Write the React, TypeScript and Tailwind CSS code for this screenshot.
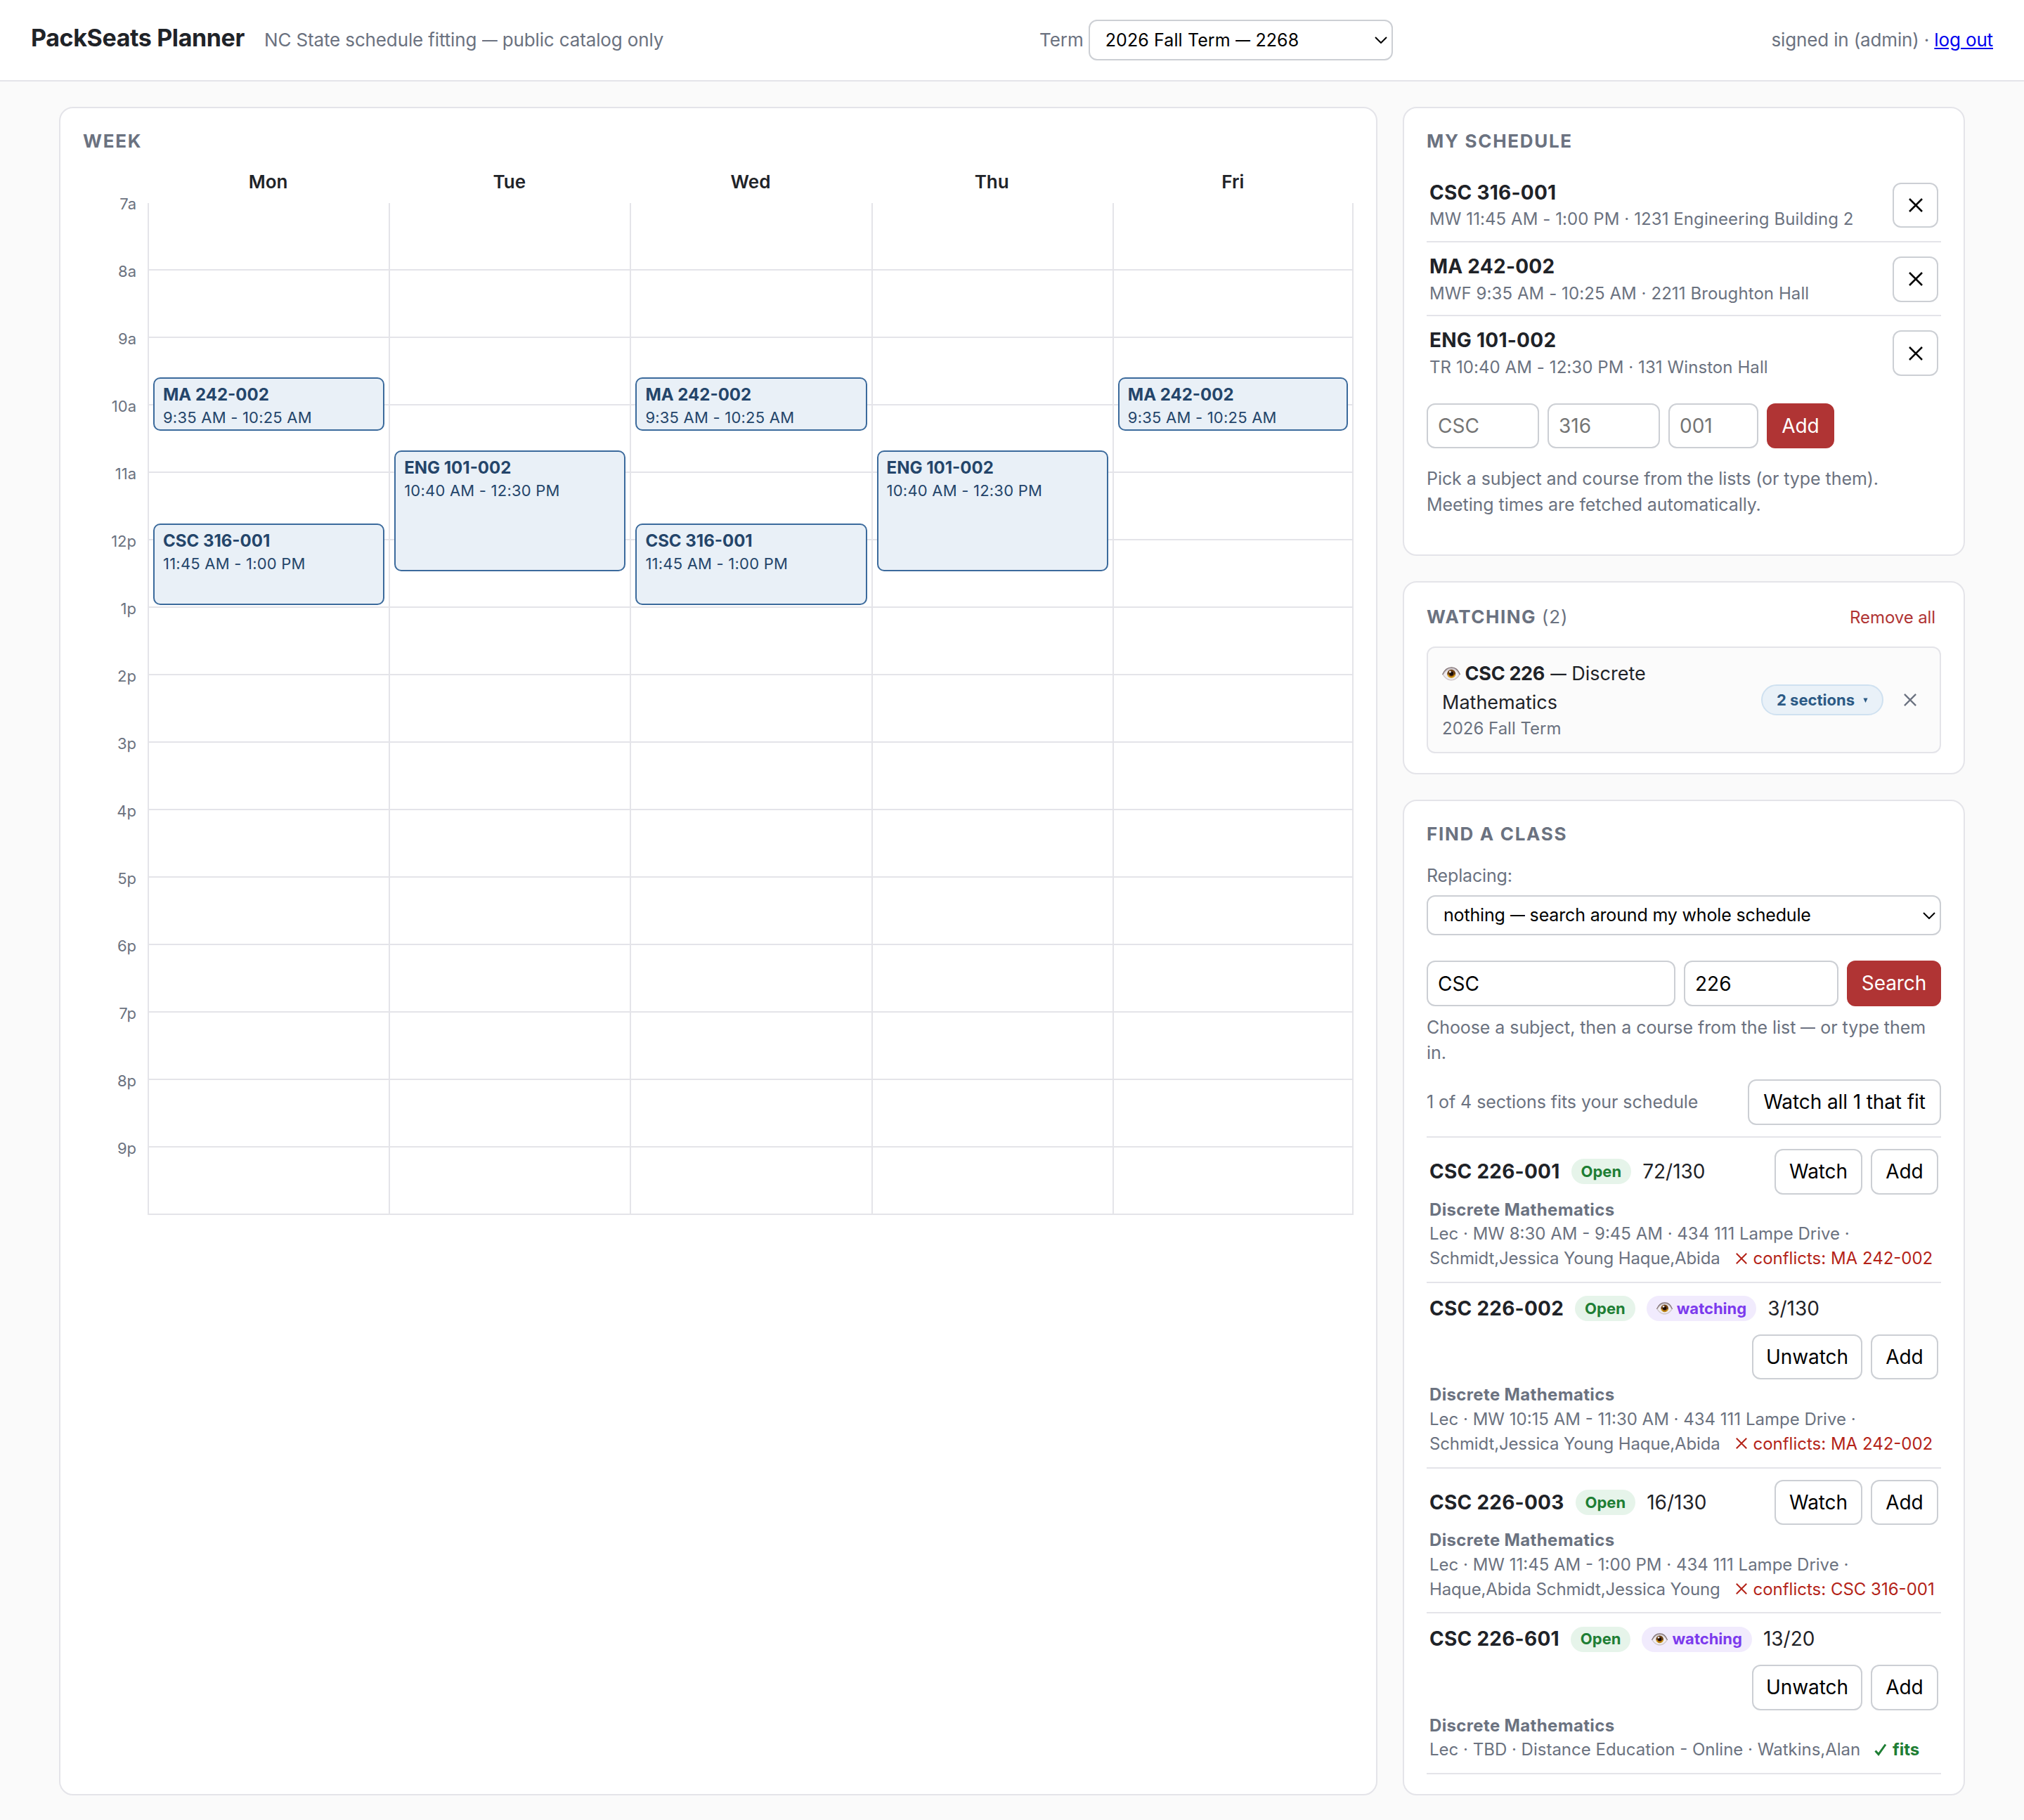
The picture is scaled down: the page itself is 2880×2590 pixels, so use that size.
import React from 'react';
import clsx from 'clsx';

interface Meeting {
  course: string;
  time: string;
  days: number[];
  start: number; // minutes since midnight
  end: number;
}

interface Section {
  name: string;
  seats: string;
  watching: boolean;
  details: string[];
  conflict?: string;
}

const DAYS = ['Mon', 'Tue', 'Wed', 'Thu', 'Fri'];
const HOURS = ['7a', '8a', '9a', '10a', '11a', '12p', '1p', '2p', '3p', '4p', '5p', '6p', '7p', '8p', '9p'];
const DAY_START = 7 * 60;
const HOUR_HEIGHT = 96;

const meetings: Meeting[] = [
  { course: 'MA 242-002', time: '9:35 AM - 10:25 AM', days: [0, 2, 4], start: 575, end: 625 },
  { course: 'ENG 101-002', time: '10:40 AM - 12:30 PM', days: [1, 3], start: 640, end: 750 },
  { course: 'CSC 316-001', time: '11:45 AM - 1:00 PM', days: [0, 2], start: 705, end: 780 },
];

const enrolled = [
  { name: 'CSC 316-001', info: 'MW 11:45 AM - 1:00 PM · 1231 Engineering Building 2' },
  { name: 'MA 242-002', info: 'MWF 9:35 AM - 10:25 AM · 2211 Broughton Hall' },
  { name: 'ENG 101-002', info: 'TR 10:40 AM - 12:30 PM · 131 Winston Hall' },
];

const sections: Section[] = [
  {
    name: 'CSC 226-001',
    seats: '72/130',
    watching: false,
    details: ['Lec · MW 8:30 AM - 9:45 AM · 434 111 Lampe Drive ·', 'Schmidt,Jessica Young Haque,Abida'],
    conflict: 'MA 242-002',
  },
  {
    name: 'CSC 226-002',
    seats: '3/130',
    watching: true,
    details: ['Lec · MW 10:15 AM - 11:30 AM · 434 111 Lampe Drive ·', 'Schmidt,Jessica Young Haque,Abida'],
    conflict: 'MA 242-002',
  },
  {
    name: 'CSC 226-003',
    seats: '16/130',
    watching: false,
    details: ['Lec · MW 11:45 AM - 1:00 PM · 434 111 Lampe Drive ·', 'Haque,Abida Schmidt,Jessica Young'],
    conflict: 'CSC 316-001',
  },
  {
    name: 'CSC 226-601',
    seats: '13/20',
    watching: true,
    details: ['Lec · TBD · Distance Education - Online · Watkins,Alan'],
  },
];

const Cross: React.FC<{ className?: string }> = ({ className }) => (
  <svg viewBox="0 0 20 20" className={clsx('inline-block', className)} fill="none" stroke="currentColor" strokeWidth="2.5">
    <path d="M1 1L19 19M19 1L1 19" />
  </svg>
);

const Check: React.FC<{ className?: string }> = ({ className }) => (
  <svg viewBox="0 0 18 18" className={clsx('inline-block', className)} fill="none" stroke="currentColor" strokeWidth="3">
    <path d="M1.5 10.5L6 15.5L16 1.5" />
  </svg>
);

const Chevron: React.FC = () => (
  <svg viewBox="0 0 18 10" className="h-2.5 w-[18px] shrink-0" fill="none" stroke="black" strokeWidth="2">
    <path d="M1 1L9 9L17 1" />
  </svg>
);

const Eye: React.FC<{ className?: string }> = ({ className }) => (
  <svg viewBox="0 0 26 20" className={clsx('inline-block', className)}>
    <path d="M0.5 11C3 5 8 0.8 13.5 0.8C19.5 0.8 23.5 5.5 25.5 11C22.5 16.5 18 19.5 13 19.5C8 19.5 3.5 16 0.5 11Z" fill="#cdc5c9" />
    <path d="M2 11C5 6.5 8.5 3.5 13.5 3.5C18.5 3.5 21.5 6.5 24 11C21 15.5 17.5 18 13 18C8.5 18 5 15.5 2 11Z" fill="#f1edf0" />
    <path d="M0.5 11C3 5 8 0.8 13.5 0.8C19.5 0.8 23.5 5.5 25.5 11" fill="none" stroke="#7f7073" strokeWidth="1.2" />
    <circle cx="13.2" cy="9.8" r="6" fill="#6b4014" />
    <path d="M7.6 10.5A5.7 5.7 0 0 0 18.9 10.5C17 12 10 12 7.6 10.5Z" fill="#e3a917" />
    <circle cx="13.2" cy="9.9" r="4" fill="#7d4612" />
    <circle cx="13.2" cy="9.5" r="2.9" fill="#170c08" />
    <circle cx="11.4" cy="7" r="1.5" fill="#e8e4ec" />
  </svg>
);

// Em dash, slightly condensed
const Dash: React.FC = () => <span className="-mx-[0.075em] inline-block scale-x-[0.84]">—</span>;

const Card: React.FC<{ className?: string; children: React.ReactNode }> = ({ className, children }) => (
  <section className={clsx('rounded-[20px] border-2 border-[#e4e4e9] bg-white px-8 py-7', className)}>{children}</section>
);

const CardTitle: React.FC<{ children: React.ReactNode }> = ({ children }) => (
  <h2 className="text-[26px] leading-[37.7px] font-bold tracking-[1.7px] text-[#6b7280] uppercase">{children}</h2>
);

const Button: React.FC<{ className?: string; primary?: boolean; children: React.ReactNode }> = ({ className, primary, children }) => (
  <button
    className={clsx(
      'flex h-[64.6px] shrink-0 items-center justify-center rounded-xl border-2 tracking-[-0.1px] whitespace-nowrap',
      primary ? 'border-[#b03434] bg-[#b03434] text-white' : 'border-[#cccfd4] bg-white text-black',
      className
    )}
  >
    {children}
  </button>
);

const Field: React.FC<{ className?: string; value?: string; placeholder?: string }> = ({ className, value, placeholder }) => (
  <input
    className={clsx('h-[64.6px] min-w-0 rounded-xl border-2 border-[#cccfd4] bg-white px-3.5 text-black placeholder:text-[#757575]', className)}
    defaultValue={value}
    placeholder={placeholder}
  />
);

const SelectBox: React.FC<{ className?: string; children: React.ReactNode }> = ({ className, children }) => (
  <div
    className={clsx(
      'flex items-center justify-between rounded-xl border-2 border-[#cccfd4] bg-white pr-1.5 pl-[22px] text-[25px] text-black',
      className
    )}
  >
    <span>{children}</span>
    <Chevron />
  </div>
);

const Header: React.FC = () => (
  <header className="flex h-[116px] items-center justify-between border-b-2 border-[#e4e4e9] bg-white px-11 text-[26px] text-[#6b7280]">
    <div className="flex items-baseline gap-7 pt-px">
      <h1 className="text-[34px] leading-none font-bold tracking-[-0.38px] text-[#1f2328]">PackSeats Planner</h1>
      <span className="tracking-[-0.13px]">
        NC State schedule fitting <Dash /> public catalog only
      </span>
    </div>
    <label className="mr-1 flex items-center gap-[7px]">
      <span className="pt-px">Term</span>
      <SelectBox className="h-[58px] w-[433px]">
        <span className="tracking-[0.1px]">
          2026 Fall Term <Dash /> 2268
        </span>
      </SelectBox>
    </label>
    <div className="pt-px tracking-[-0.14px]">
      signed in (admin) · <a className="text-[#0000ee] underline">log out</a>
    </div>
  </header>
);

const WeekGrid: React.FC = () => (
  <div className="mt-5 grid grid-cols-[92px_repeat(5,minmax(0,1fr))]">
    <div />
    {DAYS.map((day) => (
      <div key={day} className="h-[49.7px] text-center text-[26px] leading-[37.7px] font-semibold">
        {day}
      </div>
    ))}
    <div>
      {HOURS.map((hour) => (
        <div key={hour} className="h-24 pr-4 text-right text-[22px] leading-none text-[#6b7280]">
          <span className="relative -top-2.5">{hour}</span>
        </div>
      ))}
    </div>
    {DAYS.map((day, i) => (
      <div key={day} className="relative border-l-2 border-[#e4e4e9] last:border-r-2">
        {HOURS.map((hour) => (
          <div key={hour} className="h-24 border-b-2 border-[#e4e4e9]" />
        ))}
        {meetings
          .filter((m) => m.days.includes(i))
          .map((m) => (
            <div
              key={m.course}
              className="absolute inset-x-1.5 overflow-hidden rounded-[10px] border-2 border-[#3b6a9c] bg-[#e9f0f7] px-3 py-1.5 text-[#24456a]"
              style={{
                top: ((m.start - DAY_START) / 60) * HOUR_HEIGHT,
                height: ((m.end - m.start) / 60) * HOUR_HEIGHT - 4,
              }}
            >
              <div className="text-[24px] leading-[34px] font-bold">{m.course}</div>
              <div className="text-[22px] leading-[30px] tracking-[0.22px]">{m.time}</div>
            </div>
          ))}
      </div>
    ))}
  </div>
);

const ScheduleCard: React.FC = () => (
  <Card>
    <CardTitle>My schedule</CardTitle>
    <ul className="mt-5">
      {enrolled.map((item) => (
        <li key={item.name} className="flex items-center justify-between border-b-2 border-[#e4e4e9] px-1 pt-3.5 pb-[13px] last:border-b-0">
          <div>
            <div className="font-bold tracking-[0.25px]">{item.name}</div>
            <div className="mt-px text-[24px] leading-[34.8px] tracking-[0.08px] text-[#6b7280]">{item.info}</div>
          </div>
          <Button className="w-[65px]">
            <Cross className="size-5" />
          </Button>
        </li>
      ))}
    </ul>
    <div className="mt-5 flex gap-3">
      <Field className="w-40" placeholder="CSC" />
      <Field className="w-40" placeholder="316" />
      <Field className="w-32" placeholder="001" />
      <Button primary className="w-24">Add</Button>
    </div>
    <p className="my-[25px] text-[25px] leading-[36.25px] tracking-[-0.07px] text-[#6b7280]">
      Pick a subject and course from the lists (or type them).
      <br />
      Meeting times are fetched automatically.
    </p>
  </Card>
);

const WatchingCard: React.FC = () => (
  <Card>
    <div className="flex h-[43px] items-center justify-between">
      <h2 className="text-[26px] font-bold tracking-[1.5px] text-[#6b7280] uppercase">
        Watching <span className="font-normal tracking-[1px]">(2)</span>
      </h2>
      <button className="pt-px pr-2 text-[24px] tracking-[-0.1px] text-[#b03434]">Remove all</button>
    </div>
    <div className="mt-5 flex items-center rounded-xl border-2 border-[#e4e4e9] bg-[#fbfbfb] px-5 py-4">
      <div className="flex-1 pt-px text-[27px]">
        <Eye className="mb-1 h-5 w-[26px]" /> <strong className="-ml-px tracking-[-0.3px]">CSC 226</strong> <Dash /> Discrete
        <br />
        Mathematics
        <div className="-mb-px text-[24px] leading-[34.8px] text-[#6b7280]">2026 Fall Term</div>
      </div>
      <button className="flex h-11 w-[174px] items-center justify-center gap-3 rounded-full border-2 border-[#cfe1f0] bg-[#e9f1f8] text-[22px] font-bold text-[#2c5a85]">
        2 sections
        <svg viewBox="0 0 8 8" className="mt-0.5 size-[7px]" fill="currentColor">
          <path d="M0.5 0.5H7.5L4 8Z" />
        </svg>
      </button>
      <button className="flex w-15 justify-center pl-4 text-[#6b7280]">
        <Cross className="size-[18px]" />
      </button>
    </div>
  </Card>
);

const SectionRow: React.FC<{ section: Section }> = ({ section }) => (
  <li className="border-b-2 border-[#e4e4e9] px-1 pt-4 pb-[15px]">
    <div className="flex flex-wrap items-center gap-4">
      <span className="font-bold tracking-[0.25px]">{section.name}</span>
      <span className="flex h-9 items-center rounded-full bg-[#e6f4ea] px-3.5 text-[22px] font-bold text-[#1e7e34]">Open</span>
      {section.watching && (
        <span className="flex h-9 items-center gap-1.5 rounded-full bg-[#f1ebfd] px-3.5 text-[22px] font-bold text-[#7c3aed]">
          <Eye className="h-[18px] w-[23px]" />
          watching
        </span>
      )}
      <span>{section.seats}</span>
      <div className={clsx('flex justify-end gap-3', section.watching ? 'w-full' : 'ml-auto')}>
        <Button className={section.watching ? 'w-[157px]' : 'w-[125px]'}>{section.watching ? 'Unwatch' : 'Watch'}</Button>
        <Button className="w-24">Add</Button>
      </div>
    </div>
    <div className="mt-[5px] text-[24px] leading-[34.8px] whitespace-nowrap text-[#6b7280]">
      <div className="font-bold tracking-[0.35px]">Discrete Mathematics</div>
      {section.details.map((line, i) => (
        <div key={line}>
          <span className={i > 0 ? 'tracking-[-0.13px]' : undefined}>{line}</span>
          {i === section.details.length - 1 &&
            (section.conflict ? (
              <span className="ml-[22px] text-[#b42318]">
                <Cross className="mr-0.5 mb-1 size-4" /> conflicts: {section.conflict}
              </span>
            ) : (
              <span className="ml-5 font-bold text-[#1e7e34]">
                <Check className="mr-0.5 mb-1 size-[18px]" /> fits
              </span>
            ))}
        </div>
      ))}
    </div>
  </li>
);

const FindCard: React.FC = () => (
  <Card>
    <CardTitle>Find a class</CardTitle>
    <div className="mt-5 text-[25px] leading-[40.6px] tracking-[-0.15px] text-[#6b7280]">Replacing:</div>
    <SelectBox className="mt-2 h-[57px]">
      <span className="tracking-[-0.16px]">
        nothing <Dash /> search around my whole schedule
      </span>
    </SelectBox>
    <div className="mt-9 flex gap-3">
      <Field className="w-[354px]" value="CSC" />
      <Field className="w-[220px]" value="226" />
      <Button primary className="w-[134px]">Search</Button>
    </div>
    <p className="mt-3 text-[25px] leading-[36.25px] tracking-[-0.07px] text-[#6b7280]">
      Choose a subject, then a course from the list <Dash /> or type them
      <br />
      in.
    </p>
    <div className="mt-5 flex items-center justify-between border-b-2 border-[#e4e4e9] pb-4">
      <span className="text-[25px] tracking-[-0.07px] text-[#6b7280]">1 of 4 sections fits your schedule</span>
      <Button className="w-[275px]">Watch all 1 that fit</Button>
    </div>
    <ul>
      {sections.map((section) => (
        <SectionRow key={section.name} section={section} />
      ))}
    </ul>
  </Card>
);

const App: React.FC = () => (
  <div className="h-[2590px] overflow-hidden bg-[#fafafa] font-[Inter,'Liberation_Sans',sans-serif] text-[28px] leading-[40.6px] text-[#1f2328]">
    <Header />
    <main className="mx-auto grid w-[2712px] grid-cols-[minmax(0,1fr)_800px] gap-9 py-9">
      <Card>
        <CardTitle>Week</CardTitle>
        <WeekGrid />
      </Card>
      <div className="flex flex-col gap-9">
        <ScheduleCard />
        <WatchingCard />
        <FindCard />
      </div>
    </main>
  </div>
);

export default App;
